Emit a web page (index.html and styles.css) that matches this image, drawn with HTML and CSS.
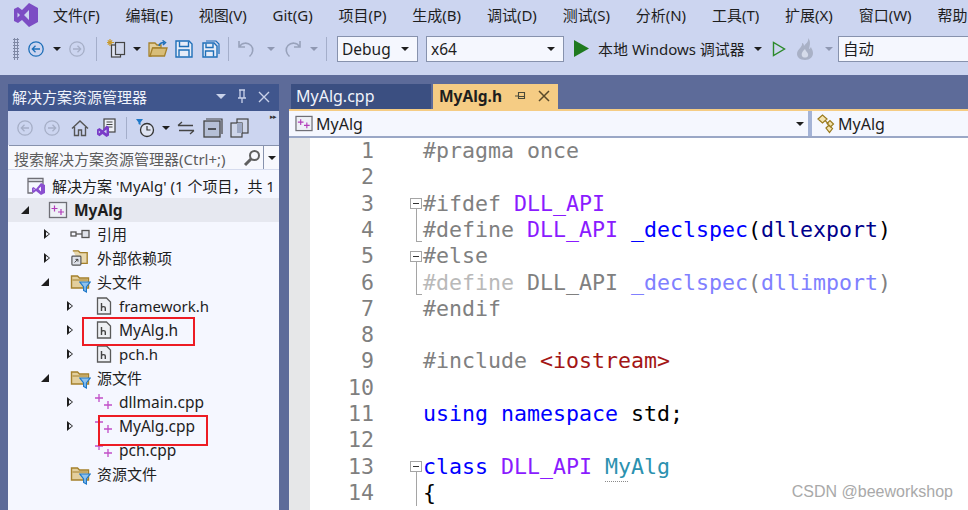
FILE: index.html
```html
<!DOCTYPE html>
<html>
<head>
    <title>MyAlg - Visual Studio</title>
    <meta charset="UTF-8">
    <link rel="stylesheet" href="styles.css">
</head>
<body>
    <svg class="defs" width="0" height="0">
        <symbol id="i-back" viewBox="0 0 18 18"><circle cx="9" cy="9" r="7.2" fill="none" stroke="currentColor" stroke-width="1.3"/><path d="M13 9H5.5M8.5 5.8 5.3 9l3.2 3.2" fill="none" stroke="currentColor" stroke-width="1.3"/></symbol>
        <symbol id="i-fwd" viewBox="0 0 18 18"><circle cx="9" cy="9" r="7.2" fill="none" stroke="currentColor" stroke-width="1.3"/><path d="M5 9h7.5M9.5 5.8 12.7 9l-3.2 3.2" fill="none" stroke="currentColor" stroke-width="1.3"/></symbol>
        <symbol id="i-save" viewBox="0 0 18 18"><path d="M1 1h13l3 3v13H1z" fill="#e6ecf8" stroke="#1e6fb8" stroke-width="1.4"/><path d="M4.5 1.5v5h9v-5M4 16.5V10h10v6.5" fill="none" stroke="#1e6fb8" stroke-width="1.4"/></symbol>
        <symbol id="i-saveall" viewBox="0 0 18 18"><path d="M4 1h10l3 3v10" fill="none" stroke="#1e6fb8" stroke-width="1.2"/><path d="M1 3h11l3 3v11H1z" fill="#e6ecf8" stroke="#1e6fb8" stroke-width="1.4"/><path d="M4 3.500v4h7v-4M3.500 16.500V11h8v5.500" fill="none" stroke="#1e6fb8" stroke-width="1.4"/></symbol>
        <symbol id="i-file" viewBox="0 0 16 18"><path d="M1.5 1h9l4 4v12h-13z" fill="#eef0f4" stroke="#5a5a5a" stroke-width="1.3"/><path d="M5.5 6v8M5.5 10.5c.6-1 3.8-1.4 3.8.6V14" fill="none" stroke="#444" stroke-width="1.4"/></symbol>
        <symbol id="i-cpp" viewBox="0 0 20 18"><path d="M5 1v8M1 5h8M14 8v8M10 12h8" stroke="#c14fc8" stroke-width="1.3" fill="none"/></symbol>
        <symbol id="i-proj" viewBox="0 0 19 18"><rect x="1" y="1.5" width="17" height="15" fill="#eef0f6" stroke="#6f6f76" stroke-width="1.3"/><path d="M6 4.5v6M3 7.5h6M12.5 8v6M9.5 11h6" stroke="#b23cba" stroke-width="1.2" fill="none"/></symbol>
        <symbol id="i-folder" viewBox="0 0 19 18"><path d="M1 3h6l2 2h9v10H1z" fill="#e3cf9d" stroke="#a5812c" stroke-width="1.4"/><path d="M2 7h15" stroke="#a5812c" stroke-width="1"/></symbol>
        <symbol id="i-filter" viewBox="0 0 12 12"><path d="M.8 1h10.4L7.4 6v5L4.6 9.500V6z" fill="#8ec2ee" stroke="#1e78c8" stroke-width="1.2"/></symbol>
        <symbol id="i-vs" viewBox="0 0 24 24"><path d="M15 0 24 5V19L15 24 8 17 4 20 0 18V6L4 4 8 7zM15 7 10 12 15 17zM3.500 9.500V14.500L6 12z" fill-rule="evenodd" fill="currentColor"/></symbol>
    </svg>

    <div class="menu-bar">
        <svg class="vs-logo"><use href="#i-vs"/></svg>
        <span class="menu-item">文件(F)</span>
        <span class="menu-item">编辑(E)</span>
        <span class="menu-item">视图(V)</span>
        <span class="menu-item">Git(G)</span>
        <span class="menu-item">项目(P)</span>
        <span class="menu-item">生成(B)</span>
        <span class="menu-item">调试(D)</span>
        <span class="menu-item">测试(S)</span>
        <span class="menu-item">分析(N)</span>
        <span class="menu-item">工具(T)</span>
        <span class="menu-item">扩展(X)</span>
        <span class="menu-item">窗口(W)</span>
        <span class="menu-item">帮助</span>
    </div>

    <div class="tool-bar">
        <span class="gripper"></span>
        <span class="cell w20"><svg class="ic18 blue"><use href="#i-back"/></svg></span>
        <span class="cell w22"><i class="caret"></i></span>
        <span class="cell w18"><svg class="ic18 faded"><use href="#i-fwd"/></svg></span>
        <span class="cell w20"><i class="sep"></i></span>
        <span class="cell w22">
            <svg width="22" height="22" viewBox="0 0 22 22"><path d="M4 1v7M1 4.500h7M1.800 2.300l4.400 4.400M6.200 2.300 1.800 6.700" stroke="#c99a2e" stroke-width="1.200"/><rect x="5.500" y="7" width="9" height="12" fill="#dfe4f2" stroke="#444" stroke-width="1.200"/><rect x="9.500" y="4.500" width="9" height="12" fill="#cfd6ea" stroke="#444" stroke-width="1.200"/></svg>
        </span>
        <span class="cell w18"><i class="caret"></i></span>
        <span class="cell w24">
            <svg width="20" height="18" viewBox="0 0 20 18"><path d="M1 3h6l2 2h4v3H5L3 16H1z" fill="#e3cf9d" stroke="#a5812c" stroke-width="1.300"/><path d="M4.500 8H19l-2.500 8H2z" fill="#d8bd78" stroke="#a5812c" stroke-width="1.300"/><path d="M11 6c.5-2.500 2.500-3.500 5-3.500M14.500.5l3 2-2.500 2.500" fill="none" stroke="#1e6fb8" stroke-width="1.500"/></svg>
        </span>
        <span class="cell w28"><svg class="ic18"><use href="#i-save"/></svg></span>
        <span class="cell w26"><svg class="ic18"><use href="#i-saveall"/></svg></span>
        <span class="cell w8"><i class="sep"></i></span>
        <span class="cell w28"><svg width="17" height="19" viewBox="0 0 17 19"><path d="M1 2v6h6M1.500 7.500C4 3.500 9.500 3 13 6.500c3 3 2 8-1.500 11" fill="none" stroke="#98a2bb" stroke-width="1.600"/></svg></span>
        <span class="cell w22"><i class="caret dim"></i></span>
        <span class="cell w20"><svg width="17" height="19" viewBox="0 0 17 19"><path d="M16 2v6h-6M15.500 7.500C13 3.500 7.500 3 4 6.500c-3 3-2 8 1.500 11" fill="none" stroke="#98a2bb" stroke-width="1.600"/></svg></span>
        <span class="cell w24"><i class="caret dim"></i></span>
        <span class="cell sep-end"><i class="sep"></i></span>
        <span class="combo combo-debug">Debug<i class="caret"></i></span>
        <span class="combo combo-arch">x64<i class="caret"></i></span>
        <span class="cell w34"><svg width="17" height="19" viewBox="0 0 17 19"><path d="M1 1v17l15-8.500z" fill="#1f7a1f"/></svg></span>
        <span class="run-label">本地 Windows 调试器</span>
        <span class="cell w19"><i class="caret"></i></span>
        <span class="cell w23"><svg width="14" height="16" viewBox="0 0 14 16"><path d="M1.500 1.500v13l11-6.500z" fill="none" stroke="#2b8a2b" stroke-width="1.400"/></svg></span>
        <span class="cell w30"><svg width="18" height="22" viewBox="0 0 18 22"><path d="M12 0c1 4-2 5-4 8 0-2-1-3-2-3 1 4-5 6-5 11 0 3 3 6 8 6 5 0 8-3 8-7 0-3-2-5-2-6-1 1-1 2-2 2 1-4 2-8-1-11z" fill="#a9b1c6"/><path d="M9 11c-2 2-4 4-3 7 1 2 5 2 6 0 1-3-2-4-3-7z" fill="#d5dbea"/></svg></span>
        <span class="cell w18"><i class="caret dim"></i></span>
        <span class="combo combo-auto">自动</span>
    </div>

    <div class="workspace">
        <div class="solution-pane">
            <div class="pane-title">
                <span class="pane-title-text">解决方案资源管理器</span>
                <i class="caret caret-title"></i>
                <svg width="10" height="15" viewBox="0 0 10 15"><path d="M2 1h6M3 1v8M7 1v8M1 9h8M5 9v5" fill="none" stroke="#c9d2ea" stroke-width="1.300"/></svg>
                <svg width="12" height="12" viewBox="0 0 12 12"><path d="M1 1l10 10M11 1 1 11" stroke="#c9d2ea" stroke-width="1.400"/></svg>
            </div>
            <div class="pane-tools">
                <span class="cell w26"><svg class="ic18 faded"><use href="#i-back"/></svg></span>
                <span class="cell w28"><svg class="ic18 faded"><use href="#i-fwd"/></svg></span>
                <span class="cell w28"><svg width="18" height="18" viewBox="0 0 18 18"><path d="M1 9.500 9 2l8 7.500M3.500 8v8.500h4V11h3v5.500h4V8" fill="none" stroke="#555" stroke-width="1.400"/></svg></span>
                <span class="cell w24">
                    <svg width="20" height="20" viewBox="0 0 20 20"><rect x="8" y="1" width="11" height="13" fill="#eef0f6" stroke="#444" stroke-width="1.200"/><path d="M10.500 4h6M10.500 6.500h6M10.500 9h6" stroke="#444"/><path d="M10.500 7.500 13 9v8.500l-2.500 1.500-4-3-3 2.200L1 16.500v-5L3.500 10l3 2.200z" fill="#7a3cc8"/><path d="M10.500 11.500v4L8 13.500zM2.800 12.500v3l1.600-1.500z" fill="#ccd5f0"/></svg>
                </span>
                <span class="cell w16"><i class="sep sep-short"></i></span>
                <span class="cell w22">
                    <svg width="20" height="20" viewBox="0 0 20 20"><circle cx="12" cy="12" r="6.500" fill="#dfe4f2" stroke="#333" stroke-width="1.300"/><path d="M12 8v4h3.500" fill="none" stroke="#333" stroke-width="1.200"/><path d="M1 1h7L5.500 4.500V7L3.500 6V4.500z" fill="#1e78c8"/></svg>
                </span>
                <span class="cell w20"><i class="caret"></i></span>
                <span class="cell w20"><svg width="18" height="14" viewBox="0 0 18 14"><path d="M1 4.500h15M5 1 1 4.500M17 9.500H2M13 13l4-3.500" fill="none" stroke="#444" stroke-width="1.300"/></svg></span>
                <span class="cell w34"><svg width="20" height="20" viewBox="0 0 20 20"><path d="M3 1h16v15" fill="none" stroke="#444" stroke-width="1.200"/><rect x="1" y="3" width="16" height="16" fill="#b5bfd6" stroke="#444" stroke-width="1.300"/><path d="M5 11h8" stroke="#222" stroke-width="1.400"/></svg></span>
                <span class="cell w20"><svg width="20" height="20" viewBox="0 0 20 20"><rect x="7" y="1" width="11" height="14" fill="#cfd6ea" stroke="#444" stroke-width="1.200"/><rect x="1" y="5" width="11" height="14" fill="#cfd6ea" stroke="#444" stroke-width="1.200"/><rect x="7" y="5" width="5" height="10" fill="#9ea9c4"/></svg></span>
                <span class="more-tools">▸▸</span>
            </div>
            <div class="pane-search">
                <span class="search-text">搜索解决方案资源管理器(Ctrl+;)</span>
                <svg class="search-icon" width="18" height="18" viewBox="0 0 18 18"><circle cx="11.500" cy="6.500" r="4.500" fill="none" stroke="#5f5f5f" stroke-width="2"/><path d="M8 10 2 16" stroke="#5f5f5f" stroke-width="3"/></svg>
                <span class="search-drop"><i class="caret"></i></span>
            </div>
            <div class="tree">
                <div class="tree-row root">
                    <svg class="tree-icon" viewBox="0 0 20 18"><path d="M2 7V1.500h15V8M2 4.500h15M2 7v9h5" fill="none" stroke="#6f6f76" stroke-width="1.300"/><path d="M15 6 19 8v8l-4 2-5-4-2.500 2L6 15v-4l1.500-1 2.500 2zM15 9.500 12.500 12l2.500 2.500zM7.700 11.500v2l1-1z" fill="#8a4fd0" fill-rule="evenodd"/></svg>
                    <span class="tree-text cn">解决方案 'MyAlg' (1 个项目，共 1 个)</span>
                </div>
                <div class="tree-row lvl0 selected">
                    <i class="expander open"></i>
                    <svg class="tree-icon"><use href="#i-proj"/></svg>
                    <span class="tree-text bold">MyAlg</span>
                </div>
                <div class="tree-row lvl1">
                    <i class="expander"></i>
                    <svg class="tree-icon" viewBox="0 0 20 18"><rect x="1" y="7" width="5" height="4" fill="none" stroke="#555" stroke-width="1.300"/><path d="M6 9h6" stroke="#555" stroke-width="1.300"/><rect x="12" y="5.500" width="7" height="7" fill="#dfe2ea" stroke="#555" stroke-width="1.300"/></svg>
                    <span class="tree-text cn">引用</span>
                </div>
                <div class="tree-row lvl1">
                    <i class="expander"></i>
                    <svg class="tree-icon" viewBox="0 0 20 20"><path d="M2 2h6l2 2h8v12h-8" fill="#e8d8ae" stroke="#a5812c" stroke-width="1.500"/><rect x="1" y="8" width="10" height="10" rx="1" fill="#dfe2ea" stroke="#555" stroke-width="1.300"/><path d="M4 15l3.500-3.500M5 11.500h2.700V14" fill="none" stroke="#333"/></svg>
                    <span class="tree-text cn">外部依赖项</span>
                </div>
                <div class="tree-row lvl1">
                    <i class="expander open"></i>
                    <span class="folder-icon"><svg class="tree-icon"><use href="#i-folder"/></svg><svg class="filter-badge"><use href="#i-filter"/></svg></span>
                    <span class="tree-text cn">头文件</span>
                </div>
                <div class="tree-row lvl2">
                    <i class="expander"></i>
                    <svg class="tree-icon"><use href="#i-file"/></svg>
                    <span class="tree-text">framework.h</span>
                </div>
                <div class="tree-row lvl2">
                    <i class="expander"></i>
                    <svg class="tree-icon"><use href="#i-file"/></svg>
                    <span class="tree-text wide">MyAlg.h</span>
                </div>
                <div class="tree-row lvl2">
                    <i class="expander"></i>
                    <svg class="tree-icon"><use href="#i-file"/></svg>
                    <span class="tree-text">pch.h</span>
                </div>
                <div class="tree-row lvl1">
                    <i class="expander open"></i>
                    <span class="folder-icon"><svg class="tree-icon"><use href="#i-folder"/></svg><svg class="filter-badge"><use href="#i-filter"/></svg></span>
                    <span class="tree-text cn">源文件</span>
                </div>
                <div class="tree-row lvl2">
                    <i class="expander"></i>
                    <svg class="tree-icon"><use href="#i-cpp"/></svg>
                    <span class="tree-text wide">dllmain.cpp</span>
                </div>
                <div class="tree-row lvl2">
                    <i class="expander"></i>
                    <svg class="tree-icon"><use href="#i-cpp"/></svg>
                    <span class="tree-text wide">MyAlg.cpp</span>
                </div>
                <div class="tree-row lvl2">
                    <i class="expander blank"></i>
                    <svg class="tree-icon"><use href="#i-cpp"/></svg>
                    <span class="tree-text wide">pch.cpp</span>
                </div>
                <div class="tree-row lvl1">
                    <i class="expander blank"></i>
                    <span class="folder-icon"><svg class="tree-icon"><use href="#i-folder"/></svg><svg class="filter-badge"><use href="#i-filter"/></svg></span>
                    <span class="tree-text cn">资源文件</span>
                </div>
            </div>
        </div>

        <div class="editor-pane">
            <div class="tab-strip">
                <div class="tab">MyAlg.cpp</div>
                <div class="tab active">
                    <span class="tab-name">MyAlg.h</span>
                    <svg width="12" height="10" viewBox="0 0 12 10"><path d="M1 5h4M4.500 1.500h6v6h-6zM4.500 5.500h6" fill="none" stroke="#4a4a3a" stroke-width="1.100"/></svg>
                    <svg width="12" height="12" viewBox="0 0 12 12"><path d="M1 1l10 10M11 1 1 11" stroke="#5a4a2a" stroke-width="1.500"/></svg>
                </div>
            </div>
            <div class="nav-bar">
                <div class="nav-left">
                    <svg class="nav-icon"><use href="#i-proj"/></svg>
                    <span class="nav-text">MyAlg</span>
                    <i class="caret"></i>
                </div>
                <div class="nav-right">
                    <svg class="nav-icon-class" viewBox="0 0 20 20"><path d="M1 5 5.500 1 10 5 5.500 9zM10 9.500l3-3 3.500 3.500-3 3zM9 14l3-3 3.500 3.500-3 4zM8.500 7l3 3" fill="#f3e3b0" stroke="#9a7a1e" stroke-width="1.200"/></svg>
                    <span class="nav-text">MyAlg</span>
                </div>
            </div>
            <div class="code-area">
                <div class="code-line"><span class="ln">1</span><span class="fold"></span><span class="code pp">#pragma once</span></div>
                <div class="code-line"><span class="ln">2</span><span class="fold"></span><span class="code"></span></div>
                <div class="code-line"><span class="ln">3</span><span class="fold"><i class="fold-box"></i></span><span class="code"><span class="pp">#ifdef</span> <span class="macro">DLL_API</span></span></div>
                <div class="code-line"><span class="ln">4</span><span class="fold"><i class="fold-end"></i></span><span class="code"><span class="pp">#define</span> <span class="macro">DLL_API</span> <span class="kw">_declspec</span>(<span class="kw-dark">dllexport</span>)</span></div>
                <div class="code-line"><span class="ln">5</span><span class="fold"><i class="fold-box"></i></span><span class="code pp">#else</span></div>
                <div class="code-line"><span class="ln">6</span><span class="fold"><i class="fold-end"></i></span><span class="code"><span class="pp-off">#define</span> <span class="pp">DLL_API</span> <span class="kw-off">_declspec</span><span class="punct-off">(</span><span class="kw-off">dllimport</span><span class="punct-off">)</span></span></div>
                <div class="code-line"><span class="ln">7</span><span class="fold"></span><span class="code pp">#endif</span></div>
                <div class="code-line"><span class="ln">8</span><span class="fold"></span><span class="code"></span></div>
                <div class="code-line"><span class="ln">9</span><span class="fold"></span><span class="code"><span class="pp">#include</span> <span class="str">&lt;iostream&gt;</span></span></div>
                <div class="code-line"><span class="ln">10</span><span class="fold"></span><span class="code"></span></div>
                <div class="code-line"><span class="ln">11</span><span class="fold"></span><span class="code"><span class="kw">using namespace</span> std;</span></div>
                <div class="code-line"><span class="ln">12</span><span class="fold"></span><span class="code"></span></div>
                <div class="code-line"><span class="ln">13</span><span class="fold"><i class="fold-box"></i></span><span class="code"><span class="kw">class</span> <span class="macro">DLL_API</span> <span class="type">MyAlg</span></span></div>
                <div class="code-line"><span class="ln">14</span><span class="fold"><i class="fold-run"></i></span><span class="code">{</span></div>
            </div>
        </div>
    </div>

    <!-- red marks drawn over the tree -->
    <div class="mark mark-header"></div>
    <div class="mark mark-source"></div>
    <div class="watermark">CSDN @beeworkshop</div>
</body>
</html>
```

FILE: styles.css
```css
/* Page */
html, body {
    margin: 0;
    padding: 0;
    height: 510px;
    overflow: hidden;
}

body {
    position: relative;
    display: flex;
    flex-direction: column;
    background: #5d6b99;
    font-family: "Noto Sans", "Noto Sans CJK SC", sans-serif;
    font-size: 15px;
    color: #1e1e1e;
}

.defs {
    position: absolute;
}

/* Menu */
.menu-bar {
    display: flex;
    align-items: center;
    height: 30px;
    padding-bottom: 1px;
    box-sizing: border-box;
    background: #ccd5f0;
    white-space: nowrap;
    overflow: hidden;
    flex: none;
}

.vs-logo {
    width: 24px;
    height: 24px;
    margin: 0 14px 0 14px;
    color: #7c4dc4;
    flex: none;
}

.menu-item {
    padding: 0 12px 0 1px;
    margin-right: 12.8px;
    flex: none;
}

/* Toolbar */
.tool-bar {
    display: flex;
    align-items: center;
    height: 45px;
    padding: 0 0 8px 13px;
    box-sizing: border-box;
    background: #ccd5f0;
    flex: none;
    white-space: nowrap;
    overflow: hidden;
}

.gripper {
    width: 6px;
    height: 22px;
    margin-right: 7px;
    flex: none;
    background: radial-gradient(circle, #7f89a6 1px, transparent 1.2px) 0 0 / 3px 3px;
}

.cell {
    display: flex;
    align-items: center;
    justify-content: center;
    flex: none;
    height: 26px;
}

.w8 { width: 8px; }
.w16 { width: 16px; }
.w18 { width: 18px; }
.w19 { width: 19px; }
.w20 { width: 20px; }
.w22 { width: 22px; }
.w23 { width: 23px; }
.w24 { width: 24px; }
.w26 { width: 26px; }
.w28 { width: 28px; }
.w30 { width: 30px; }
.w34 { width: 34px; }

.sep-end {
    width: 11px;
    justify-content: flex-start;
}

.ic18 {
    width: 18px;
    height: 18px;
    flex: none;
}

.blue { color: #1e6fb8; }
.faded { color: #a6afc7; }

.caret {
    display: block;
    width: 0;
    height: 0;
    flex: none;
    border-left: 4px solid transparent;
    border-right: 4px solid transparent;
    border-top: 4px solid #1e1e1e;
}

.caret.dim {
    border-top-color: #8f98b2;
}

.sep {
    display: block;
    width: 1px;
    height: 24px;
    background: #a4aeca;
}

.sep-short {
    height: 22px;
}

.combo {
    display: flex;
    align-items: center;
    justify-content: space-between;
    height: 26px;
    padding: 0 8px 0 4px;
    box-sizing: border-box;
    border: 1px solid #8792ad;
    background: #f5f7fe;
    flex: none;
    font-size: 15.5px;
}

.combo-debug { width: 81px; margin-right: 8px; }
.combo-arch { width: 138px; }
.combo-auto { width: 140px; justify-content: flex-start; }

.run-label {
    width: 150px;
    flex: none;
}

/* Main area */
.workspace {
    display: flex;
    flex: 1;
    min-height: 0;
    padding: 9px 0 0 8px;
}

.solution-pane {
    display: flex;
    flex-direction: column;
    width: 271px;
    margin-right: 10px;
    flex: none;
    overflow: hidden;
    background: #f5f7ff;
}

.pane-title {
    display: flex;
    align-items: center;
    gap: 11px;
    height: 27px;
    padding: 0 9px 2px 4px;
    box-sizing: border-box;
    flex: none;
    background: #40568d;
    color: #f0f3fb;
}

.pane-title-text {
    flex: 1;
}

.caret-title {
    border-top-color: #c9d2ea;
    border-left-width: 5px;
    border-right-width: 5px;
    border-top-width: 5px;
}

.pane-tools {
    display: flex;
    align-items: center;
    position: relative;
    height: 34px;
    padding-left: 4px;
    flex: none;
    background: #ccd5f0;
}

.more-tools {
    position: absolute;
    right: 3px;
    top: 1px;
    font-size: 7px;
    letter-spacing: -1px;
    color: #333;
}

.pane-search {
    display: flex;
    align-items: center;
    height: 25px;
    margin-left: 1px;
    flex: none;
    box-sizing: border-box;
    border-top: 1px solid #8792ad;
    background: #f7f8fd;
    overflow: hidden;
}

.search-text {
    flex: 1;
    padding-left: 5px;
    color: #5c5c5c;
    white-space: nowrap;
}

.search-icon {
    margin-right: 2px;
    flex: none;
}

.search-drop {
    display: flex;
    align-items: center;
    justify-content: center;
    width: 15px;
    height: 100%;
    flex: none;
    border-left: 1px solid #8792ad;
}

/* Tree */
.tree {
    flex: 1;
    padding-top: 4px;
    border-top: 1px solid #d6dcee;
    margin-top: -1px;
    white-space: nowrap;
    overflow: hidden;
}

.tree-row {
    display: flex;
    align-items: center;
    height: 24px;
}

.tree-row.root { padding-left: 18px; }
.tree-row.lvl0 { padding-left: 10px; }
.tree-row.lvl1 { padding-left: 30px; }
.tree-row.lvl2 { padding-left: 53px; }

.selected {
    background: #e6e8f0;
}

.expander {
    display: block;
    position: relative;
    width: 16px;
    height: 16px;
    flex: none;
    margin-right: 14px;
}

.lvl1 .expander { margin-right: 16px; }
.lvl2 .expander { margin-right: 17px; }

.expander::before {
    content: "";
    position: absolute;
    left: 6px;
    top: 3px;
    border-left: 6px solid #1e1e1e;
    border-top: 5px solid transparent;
    border-bottom: 5px solid transparent;
}

.expander::after {
    content: "";
    position: absolute;
    left: 7.500px;
    top: 5.500px;
    border-left: 3px solid #f5f7ff;
    border-top: 2.500px solid transparent;
    border-bottom: 2.500px solid transparent;
}

.expander.open::before {
    left: 3px;
    top: 4px;
    border: 0;
    border-bottom: 8px solid #1e1e1e;
    border-left: 8px solid transparent;
}

.expander.open::after,
.expander.blank::before,
.expander.blank::after {
    display: none;
}

.tree-icon {
    width: 20px;
    height: 18px;
    margin-right: 6px;
    flex: none;
}

.lvl1 .tree-icon { margin-right: 7px; }
.lvl2 .tree-icon { margin-right: 5px; }

.folder-icon {
    position: relative;
    display: flex;
    flex: none;
}

.filter-badge {
    position: absolute;
    left: 9px;
    top: 8px;
    width: 12px;
    height: 12px;
}

.tree-text.cn {
    margin-top: -2px;
}

.tree-text.wide {
    font-size: 15.5px;
}

.tree-text.bold {
    font-size: 15.5px;
    font-weight: 700;
}

/* Editor */
.editor-pane {
    display: flex;
    flex-direction: column;
    flex: 1;
    min-width: 0;
}

.tab-strip {
    display: flex;
    gap: 2px;
    height: 25px;
    padding-left: 2px;
    flex: none;
    border-bottom: 2px solid #f5cc84;
}

.tab {
    display: flex;
    align-items: center;
    gap: 12px;
    width: 140px;
    padding: 0 0 2px 5px;
    box-sizing: border-box;
    background: #3b4f81;
    color: #f0f3fb;
    font-size: 16px;
}

.tab.active {
    width: 125px;
    padding-left: 6px;
    background: #f5cc84;
    color: #1e1e1e;
    font-size: 15.5px;
}

.tab-name {
    width: 63px;
    font-weight: 700;
}

.nav-bar {
    display: flex;
    height: 27px;
    flex: none;
    box-sizing: border-box;
    border-bottom: 2px solid #9aa7c6;
    background: #f5f7fe;
    font-size: 16px;
}

.nav-left {
    display: flex;
    align-items: center;
    width: 523px;
    padding: 0 4px 0 6px;
    box-sizing: border-box;
    flex: none;
    border-right: 4px solid #a4b3d6;
}

.nav-left .nav-text {
    flex: 1;
}

.nav-right {
    display: flex;
    align-items: center;
    padding-left: 5px;
}

.nav-icon {
    width: 18px;
    height: 17px;
    margin-right: 3px;
    flex: none;
}

.nav-icon-class {
    width: 20px;
    height: 20px;
    margin-right: 1px;
    flex: none;
}

.code-area {
    flex: 1;
    overflow: hidden;
    padding-left: 21px;
    background: #ffffff linear-gradient(#e6e7e8, #e6e7e8) no-repeat 0 0 / 21px 100%;
    font-family: "DejaVu Sans Mono", monospace;
    font-size: 21.6px;
}

.code-line {
    display: flex;
    align-items: center;
    height: 26.3px;
    white-space: pre;
}

.code-line:first-child {
    margin-top: -0.6px;
}

.ln {
    width: 64px;
    margin-right: 36px;
    flex: none;
    text-align: right;
    color: #7f7f7f;
}

.fold {
    position: relative;
    width: 13px;
    height: 100%;
    flex: none;
}

.fold-box {
    position: absolute;
    left: 0;
    top: 8px;
    width: 10px;
    height: 9px;
    border: 1px solid #a5a5a5;
    background: #ffffff;
}

.fold-box::after {
    content: "";
    position: absolute;
    left: 2px;
    top: 4px;
    width: 6px;
    height: 1px;
    background: #333333;
}

.fold-box::before {
    content: "";
    position: absolute;
    left: 5px;
    top: 10px;
    height: 9px;
    border-left: 1px solid #a5a5a5;
}

.fold-end {
    position: absolute;
    left: 6px;
    top: 0;
    width: 5px;
    height: 25px;
    border-left: 1px solid #a5a5a5;
    border-bottom: 1px solid #a5a5a5;
}

.fold-run {
    position: absolute;
    left: 6px;
    top: 0;
    height: 100%;
    border-left: 1px solid #a5a5a5;
}

.code {
    color: #000000;
}

.pp { color: #808080; }
.pp-off { color: #b9b9b9; }
.macro { color: #8a1bff; }
.kw { color: #0000ff; }
.kw-dark { color: #00008b; }
.kw-off { color: #8080ff; }
.punct-off { color: #808080; }
.str { color: #a31515; }

.type {
    position: relative;
    color: #2b91af;
}

.type::after {
    content: "";
    position: absolute;
    left: 0;
    bottom: -3px;
    width: 23px;
    border-bottom: 1px dotted #8a8a8a;
}

/* Overlays */
.mark {
    position: absolute;
    box-sizing: border-box;
    border: 2px solid #ed1c24;
}

.mark-header {
    left: 82px;
    top: 317px;
    width: 113px;
    height: 29px;
}

.mark-source {
    left: 98px;
    top: 415px;
    width: 110px;
    height: 31px;
}

.watermark {
    position: absolute;
    right: 15px;
    top: 483px;
    font-family: "Liberation Sans", sans-serif;
    font-size: 16px;
    color: #a9a9a9;
}
```
